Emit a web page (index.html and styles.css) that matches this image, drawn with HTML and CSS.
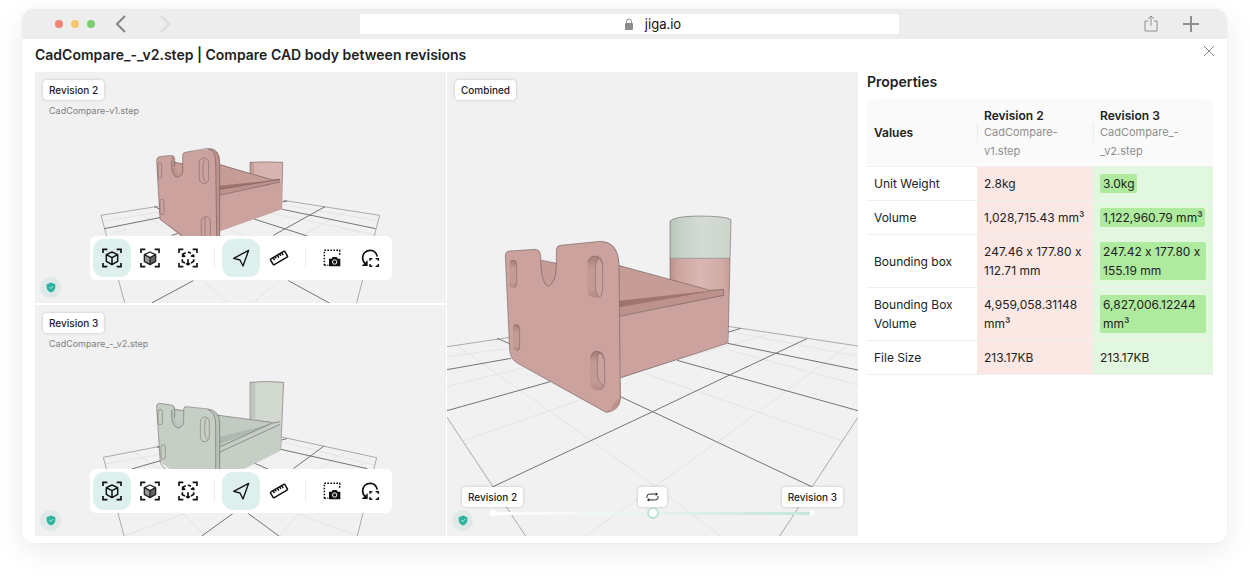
FILE: index.html
```html
<!DOCTYPE html>
<html lang="en">
<head>
<meta charset="utf-8">
<title>CadCompare_-_v2.step | Compare CAD body between revisions</title>
<meta name="viewport" content="width=device-width, initial-scale=1">
<link rel="stylesheet" href="styles.css">
</head>
<body>
<svg class="sprite" aria-hidden="true">
  <symbol id="frame" viewBox="0 0 60 60">
    <path d="M3 15V4h13M44 4h13v11M57 45v11H44M16 56H3V45" fill="none" stroke="#111" stroke-width="5"/>
  </symbol>
  <symbol id="cube" viewBox="0 0 60 60">
    <use href="#frame"/>
    <path d="M30 12l17 8v20l-17 10-17-10V20zM13 20l17 9 17-9M30 29v21" fill="none" stroke="#111" stroke-width="4.5" stroke-linejoin="round"/>
  </symbol>
  <symbol id="solid" viewBox="0 0 60 60">
    <use href="#frame"/>
    <path d="M13 20l17 9v21l-17-10z" fill="#999"/><path d="M47 20l-17 9v21l17-10z" fill="#666"/>
    <path d="M30 12l17 8v20l-17 10-17-10V20zM13 20l17 9 17-9M30 29v21" fill="none" stroke="#222" stroke-width="4" stroke-linejoin="round"/>
  </symbol>
  <symbol id="explode" viewBox="0 0 60 60">
    <use href="#frame"/>
    <path d="M23 14l-9 5v9M14 21l8 5M13 34v7l8 4M30 12l9 4M47 20l-8 5M47 20v8M47 34v6l-8 5M30 34v16M24 46l6 4 6-4" fill="none" stroke="#111" stroke-width="5"/>
  </symbol>
  <symbol id="arrow" viewBox="0 0 60 60">
    <path d="M53 7L8 31l19 5 9 18z" fill="none" stroke="#111" stroke-width="4" stroke-linejoin="round"/>
  </symbol>
  <symbol id="ruler" viewBox="0 0 60 60">
    <g transform="rotate(-30 30 30)" fill="none" stroke="#111" stroke-width="4.5">
      <rect x="5" y="20" width="50" height="20" rx="3"/><path d="M15 20v9M22 20v7M30 20v9M38 20v7M45 20v9"/>
    </g>
  </symbol>
  <symbol id="shot" viewBox="0 0 60 60">
    <path d="M7 52V7h46v16M7 52h12" fill="none" stroke="#111" stroke-width="4.5" stroke-dasharray="5 4"/>
    <path fill="#111" d="M21 32h8l3-5h12l3 5h8v23H21z"/><circle cx="38" cy="42" r="6.5" fill="none" stroke="#fff" stroke-width="3"/>
  </symbol>
  <symbol id="reset" viewBox="0 0 60 60">
    <path d="M52 26C49 13 41 7 31 7 17 7 8 17 8 30c0 9 4 14 9 18" fill="none" stroke="#111" stroke-width="5"/>
    <path fill="#111" d="M5 54h18V37z"/>
    <path d="M30 38v-6h7M47 32h8v6M55 48v7h-8M37 55h-7v-7" fill="none" stroke="#111" stroke-width="4.5"/>
  </symbol>
  <symbol id="shield" viewBox="0 0 30 32">
    <path d="M15 1l13 5v9c0 8-6 13-13 16C8 28 2 23 2 15V6z" fill="#2fb3a0"/>
    <path d="M10 15l4 4 7-7" fill="none" stroke="#d9f3ee" stroke-width="2.5"/>
  </symbol>
</svg>

<div class="window">
  <header class="titlebar">
    <div class="titlebar-left">
      <span class="dot dot-red"></span><span class="dot dot-yellow"></span><span class="dot dot-green"></span>
      <button class="nav nav-back" aria-label="Back"><svg viewBox="0 0 10 18"><path d="M9 1L1 9l8 8"/></svg></button>
      <button class="nav nav-forward" aria-label="Forward"><svg viewBox="0 0 10 18"><path d="M1 1l8 8-8 8"/></svg></button>
    </div>
    <div class="address">
      <svg class="lock" viewBox="0 0 10 13"><path d="M2.500 6V3.500a2.500 2.500 0 0 1 5 0V6" fill="none" stroke="#8c8c8c"/><rect x="1" y="5" width="8" height="7" rx="1" fill="#8c8c8c"/></svg>
      <span>jiga.io</span>
    </div>
    <div class="titlebar-right">
      <button class="tool" aria-label="Share"><svg width="14" height="18" viewBox="0 0 14 18"><path d="M4 6H1v10h12V6h-3M7 11V1M4 4l3-3 3 3" stroke-linejoin="round"/></svg></button>
      <button class="tool tool-add" aria-label="New tab"><svg width="16" height="16" viewBox="0 0 16 16"><path d="M8 0v16M0 8h16"/></svg></button>
    </div>
  </header>

  <div class="heading">
    <h1>CadCompare_-_v2.step | Compare CAD body between revisions</h1>
    <button class="close" aria-label="Close"><svg width="12" height="12" viewBox="0 0 12 12"><path d="M1 1l10 10M11 1L1 11"/></svg></button>
  </div>

  <main class="content">
    <div class="viewers">
      <div class="stack">
        <section class="viewer">
          <svg class="scene" viewBox="15 -174 1233 693" preserveAspectRatio="xMidYMid slice" role="img" aria-label="Revision 2 model">
            <g class="grid-faint"><path d="M218 274L388 246M320 246L400 290M765 225l278 47M952 242L815 318M600 300l48 20M520 452l72 67M745 452l-75 67M250 308l40-10M990 308l-55-13M700 245l345 70"/></g>
            <g class="grid-edge"><path d="M284 518L213 256 385 229M980 518l69-262-290-45"/></g>
            <g class="grid-dark"><path d="M223 296l170-34M372 229l25 12M757 238l280 58M757 216l15-3M885 230L730 316M672 267l160 51M425 316l35-10M490 452l-125 67M775 452l123 67"/></g>
            <path class="pink-light" d="M660 97q50-4 98 0L755 238H660z"/>
            <path class="pink-shade" d="M660 97h12v60h-12z"/>
            <path class="outline" d="M660 130V97q50-3 98 0L755 238"/>
            <path class="pink-top" d="M560 100l170 50 20 0-180 45z"/>
            <path class="pink-deep" d="M566 167l170-17-166 28z"/>
            <path class="pink-mid" d="M568 178l182-30v9L568 196z"/>
            <path class="pink" d="M568 194l188-38v82L570 304z"/>
            <path class="outline" d="M566 103l162 47 22-2M568 178l182-30M568 196l182-40"/>
            <path class="pink-top" d="M424 94l36 7v44h-36z"/>
            <path class="pink-mid" d="M425 76q9 2 9 13v22q6 24 20 26l-12 6q-22-6-22-60z"/>
            <path class="pink-mid" d="M540 55q28 4 30 37v226h-20z"/>
            <path class="pink" d="M380 92q0-10 8-12l30-3q7 1 7 12v21q2 30 17 32 16-4 16-20V76q0-8 7-9l70-10q21 0 22 35l3 226h-108L390 268z"/>
            <path class="outline" d="M458 318L390 268 380 92q0-10 8-12l36-4q10 0 10 12v22M432 97l26 4M425 92v18q2 30 17 32 16-4 16-20V76q0-8 7-9l68-12q34 0 36 40v223M533 58q22 0 24 35l3 225"/>
            <g class="slot"><rect x="384" y="98" width="11" height="47" rx="6"/><rect x="390" y="208" width="12" height="46" rx="6"/><rect x="508" y="83" width="28" height="78" rx="14"/><path d="M526 86q-7 4-7 20v30q2 16 9 22"/><rect x="514" y="260" width="27" height="78" rx="14"/><path d="M525 262v60"/></g>
          </svg>
          <div class="caption"><span class="pill">Revision 2</span><span class="file">CadCompare-v1.step</span></div>
          <div class="toolbar" role="toolbar" aria-label="View tools">
            <button class="active" aria-label="Wireframe"><svg><use href="#cube"/></svg></button>
            <button aria-label="Solid"><svg><use href="#solid"/></svg></button>
            <button aria-label="Explode"><svg><use href="#explode"/></svg></button>
            <i></i>
            <button class="active" aria-label="Select"><svg><use href="#arrow"/></svg></button>
            <button aria-label="Measure"><svg><use href="#ruler"/></svg></button>
            <i></i>
            <button aria-label="Snapshot"><svg><use href="#shot"/></svg></button>
            <button aria-label="Reset view"><svg><use href="#reset"/></svg></button>
          </div>
          <span class="badge"><svg><use href="#shield"/></svg></span>
        </section>

        <section class="viewer">
          <svg class="scene" viewBox="15 15 1233 693" preserveAspectRatio="xMidYMid slice" role="img" aria-label="Revision 3 model">
            <g class="grid-faint"><path d="M226 492l165-29M310 455l75 50M765 428l272 68M948 453l-90 60M600 500l40 18M460 642l65 66M805 642l-57 66M460 642L282 708M805 642l177 66"/></g>
            <g class="grid-edge"><path d="M282 708L220 472l170-33M982 708l58-235-285-62"/></g>
            <g class="grid-dark"><path d="M305 507l90-26M380 439l15 8M752 448l260 58M755 420l15-4M882 438l-92 68M670 488l45 20M608 641l-93 67M655 641l92 67"/></g>
            <path class="green-light" d="M660 247q50-5 101 0l-9 204h-92z"/>
            <path class="green-shade" d="M662 247h14v110h-14z"/>
            <path class="outline" d="M660 358V247q50-5 101 0l-9 203"/>
            <path class="green-top" d="M560 345l168 22 22-1-180 85z"/>
            <path class="green-deep" d="M568 411l150-38 6 0-156 60z"/>
            <path class="green" d="M568 448l184-80v84l-110 55-72 30z"/>
            <path class="outline" d="M560 345l164 22M568 441l156-71 26-5M568 457l182-84"/>
            <path class="green-top" d="M426 326l34 5v50h-34z"/>
            <path class="green-mid" d="M425 315q9 2 9 13v26q6 24 20 26l-9 6q-22-8-22-60z"/>
            <path class="green-mid" d="M530 327q34 3 40 40v240h-22z"/>
            <path class="green" d="M380 320q0-9 8-10l30 4q7 1 7 13v22q2 32 20 35 16-4 16-22v-34q0-9 8-8l66 9q22 4 23 43v235L398 492q-8-7-8-20z"/>
            <path class="outline" d="M408 508q-18-10-18-32L380 320q0-9 8-10l36 5q10 2 10 12v26M434 328l26 4M425 330v19q2 32 20 35 16-4 16-22v-34q0-9 8-8l66 7q34 4 34 44v142M534 329q22 6 23 43v140"/>
            <g class="slot"><rect x="384" y="328" width="13" height="46" rx="7"/><rect x="393" y="434" width="13" height="44" rx="7"/><rect x="511" y="351" width="27" height="74" rx="14"/><path d="M530 354q-6 4-6 20v25q2 14 9 20"/></g>
          </svg>
          <div class="caption"><span class="pill">Revision 3</span><span class="file">CadCompare_-_v2.step</span></div>
          <div class="toolbar" role="toolbar" aria-label="View tools">
            <button class="active" aria-label="Wireframe"><svg><use href="#cube"/></svg></button>
            <button aria-label="Solid"><svg><use href="#solid"/></svg></button>
            <button aria-label="Explode"><svg><use href="#explode"/></svg></button>
            <i></i>
            <button class="active" aria-label="Select"><svg><use href="#arrow"/></svg></button>
            <button aria-label="Measure"><svg><use href="#ruler"/></svg></button>
            <i></i>
            <button aria-label="Snapshot"><svg><use href="#shot"/></svg></button>
            <button aria-label="Reset view"><svg><use href="#reset"/></svg></button>
          </div>
          <span class="badge"><svg><use href="#shield"/></svg></span>
        </section>
      </div>

      <section class="viewer">
        <svg class="scene" viewBox="0 -384 1233 1392" preserveAspectRatio="xMidYMid slice" role="img" aria-label="Combined model">
          <defs>
            <linearGradient id="cylPink"><stop offset="0" stop-color="#bd8f8a"/><stop offset=".12" stop-color="#cca39e"/><stop offset=".5" stop-color="#dab7b2"/><stop offset=".85" stop-color="#d2aca7"/><stop offset="1" stop-color="#c79d98"/></linearGradient>
            <linearGradient id="cylGreen"><stop offset="0" stop-color="#b7c5ba"/><stop offset=".2" stop-color="#c9d3ca"/><stop offset=".55" stop-color="#d4dbd4"/><stop offset="1" stop-color="#ccd5cc"/></linearGradient>
            <linearGradient id="bore" x2="0" y2="1"><stop offset="0" stop-color="#a97c77"/><stop offset=".3" stop-color="#c49a95"/><stop offset=".8" stop-color="#c49a95"/><stop offset="1" stop-color="#b58883"/></linearGradient>
          </defs>
          <g class="grid-faint"><path d="M30 437L620 855 820 1008M0 470l185-25M0 560l250-62M50 722l360-126M845 394l388 75M845 450l388 105M960 404L690 480M1200 437L820 720 415 1008M585 518l600 204"/></g>
          <g class="grid-edge"><path d="M0 440l190-28M842 379l391 59M0 652l236 356M1233 652L998 1008"/></g>
          <g class="grid-dark"><path d="M0 509l192-34M150 415l40 17M0 632l310-87M842 397l40-12M842 430l391 80M1080 416L850 524 617 635 138 860M690 481l543 151M520 590l97 45 477 225"/></g>
          <path fill="url(#cylGreen)" d="M669 64q8-14 80-16 90 0 103 11l-3 116H669z"/>
          <path fill="url(#cylPink)" d="M669 176h180l-6 254H669z"/>
          <path class="outline" d="M669 240V64q8-14 80-16 90 0 103 11l-9 370M669 175h180"/>
          <path class="pink-top" d="M510 194l275 76 45 0-310 55z"/>
          <path class="pink-deep" d="M515 302l275-30 40-4-315 55z"/>
          <path class="pink-mid" d="M518 322l312-54v20L518 349z"/>
          <path class="pink" d="M518 349l312-61 14-15-3 157L520 535z"/>
          <path class="outline" d="M510 195l280 76 40-3v18L518 349"/>
          <path class="pink-top" d="M276 180l55 10v70h-55z"/>
          <path class="pink-mid" d="M470 125q44 8 46 68l5 405q-2 34-42 40z"/>
          <path class="pink" d="M175 168q0-14 11-15l78-5q16 1 17 20-1 82 23 92 23-14 24-60v-50q0-12 12-14l120-12q52 0 56 65l4 404q-4 44-46 43L212 490q-22-12-24-40z"/>
          <path class="outline" d="M479 638L212 490q-22-12-24-40L175 168q0-14 11-15l78-5q16 1 17 20-1 82 23 92 23-14 24-60v-50q0-12 12-14l120-12q52 0 56 65l4 404q-4 35-41 44M282 180l46 10M521 533l320-103"/>
          <path class="pink-mid" d="M492 634q2-26 27-40-2 28-27 40z"/>
          <g class="bore">
            <rect x="188" y="180" width="21" height="83" rx="10"/><rect x="198" y="373" width="20" height="79" rx="10"/>
            <rect x="421" y="168" width="46" height="125" rx="22"/><rect x="429" y="453" width="44" height="117" rx="21"/>
          </g>
          <path class="pink" d="M455 176q11 8 11 30v50q0 26-10 34-11-10-11-34v-50q0-22 10-30zM462 462q10 10 10 30v50q0 12-4 14-17-12-17-34v-45q0-16 11-15z"/>
          <g class="slot"><path d="M193 181q16-2 16 20v45q0 15-8 17M203 374q15 0 15 20v45q0 13-8 13M424 186q6-18 20-18 23 0 23 34v54q0 36-13 37M455 176q-10 8-10 30v50q0 24 11 34M432 470q6-17 15-17 26 6 26 42v50q0 22-15 25M454 460q-4 8-3 27v35q0 22 17 34"/></g>
        </svg>
        <div class="caption"><span class="pill">Combined</span></div>
        <div class="compare">
          <div class="compare-labels"><label class="pill" for="blend">Revision 2</label>
            <button class="swap" aria-label="Swap revisions"><svg viewBox="0 0 40 28"><path d="M3 17V12q0-7 8-7h23M37 11v5q0 7-8 7H6" fill="none" stroke="#222" stroke-width="3"/><path d="M30 0l7 5-7 6zM10 17l-7 6 7 5z" fill="#222"/></svg></button>
            <span class="pill">Revision 3</span></div>
          <div class="slider"><input id="blend" type="range" min="0" max="100" value="50"></div>
        </div>
        <span class="badge"><svg><use href="#shield"/></svg></span>
      </section>
    </div>

    <aside class="properties">
      <h2>Properties</h2>
      <table>
        <colgroup><col class="col-name"><col class="col-old"><col class="col-new"></colgroup>
        <thead><tr>
          <th scope="col">Values</th>
          <th scope="col"><div class="rev">Revision 2</div><div class="rev-file">CadCompare-<br>v1.step</div></th>
          <th scope="col"><div class="rev">Revision 3</div><div class="rev-file">CadCompare_-<br>_v2.step</div></th>
        </tr></thead>
        <tbody>
          <tr><td>Unit Weight</td><td>2.8kg</td><td><mark>3.0kg</mark></td></tr>
          <tr><td>Volume</td><td>1,028,715.43 mm³</td><td><mark>1,122,960.79 mm³</mark></td></tr>
          <tr><td>Bounding box</td><td>247.46 x 177.80 x 112.71 mm</td><td><mark>247.42 x 177.80 x 155.19 mm</mark></td></tr>
          <tr><td>Bounding Box Volume</td><td>4,959,058.31148 mm³</td><td><mark>6,827,006.12244 mm³</mark></td></tr>
          <tr><td>File Size</td><td>213.17KB</td><td>213.17KB</td></tr>
        </tbody>
      </table>
    </aside>
  </main>
</div>
</body>
</html>
```

FILE: styles.css
```css
* { box-sizing: border-box; }
body {
  margin: 0;
  min-height: 100vh;
  padding: 9px 22px 36px;
  display: flex;
  background: #fff;
  color: #222;
  font: 12px/19px Inter, "Liberation Sans", sans-serif;
  font-variant-ligatures: no-contextual;
}
button { border: 0; padding: 0; background: none; font: inherit; display: flex; align-items: center; justify-content: center; }
svg { display: block; }
.sprite { position: absolute; width: 0; height: 0; }

.window {
  flex: 1;
  min-width: 0;
  display: flex;
  flex-direction: column;
  border-radius: 12px;
  background: #fff;
  overflow: hidden;
  box-shadow: 0 8px 30px rgba(0, 0, 0, .08), 0 0 3px rgba(0, 0, 0, .05);
}

.titlebar {
  display: grid;
  grid-template-columns: 1fr minmax(0, 539px) 1fr;
  align-items: center;
  height: 30px;
  padding-left: 10px;
  background: #ededed;
}
.titlebar-left { display: flex; align-items: center; gap: 8px; padding-left: 23px; }
.dot { width: 8px; height: 8px; border-radius: 50%; }
.dot-red { background: #ee8277; }
.dot-yellow { background: #f4c66e; }
.dot-green { background: #7ece74; }
.nav svg { width: 10px; height: 18px; fill: none; stroke: #858585; stroke-width: 2; }
.nav-back { margin-left: 13px; }
.nav-forward { margin-left: 26px; }
.nav-forward svg { stroke: #dadada; }
.address {
  display: flex;
  align-items: center;
  justify-content: center;
  gap: 11px;
  height: 20px;
  padding-left: 46px;
  border-radius: 2px;
  background: #fff;
  color: #111;
  font-size: 13px;
}
.lock { width: 10px; height: 13px; }
.titlebar-right { display: flex; align-items: center; justify-content: flex-end; gap: 25px; padding-right: 28px; }
.tool svg { fill: none; stroke: #8e8e8e; }
.tool-add svg { stroke-width: 2; }

.heading { display: flex; justify-content: space-between; height: 33px; padding: 6px 12px 0 13px; }
h1, h2 { margin: 0; font-size: 14px; line-height: 20px; font-weight: 600; color: #1f1f1f; }
.close { height: 12px; }
.close svg { fill: none; stroke: #858585; }

.content { flex: 1; display: grid; grid-template-columns: minmax(0, 1fr) 346px; gap: 9px; padding: 0 14px 7px 13px; }
.viewers { display: grid; grid-template-columns: repeat(2, minmax(0, 1fr)); gap: 1px; min-height: 464px; }
.stack { display: grid; grid-template-rows: 1fr 1fr; gap: 2px; }
.viewer { position: relative; overflow: hidden; background: #f1f1f1; }
.scene { position: absolute; inset: 0; width: 100%; height: 100%; }
.caption { position: relative; display: flex; flex-direction: column; align-items: flex-start; gap: 4px; padding: 8px; }
.pill {
  display: inline-block;
  height: 20px;
  padding: 0 6px;
  border-radius: 4px;
  background: #fff;
  box-shadow: 0 0 3px rgba(0, 0, 0, .22);
  font-size: 10px;
  font-weight: 500;
  line-height: 20px;
}
.file { padding-left: 6px; color: #808080; font-size: 9px; line-height: 14px; }

.toolbar {
  position: absolute;
  bottom: 23px;
  left: 50%;
  transform: translateX(-50%);
  display: flex;
  align-items: center;
  padding: 3px;
  border-radius: 6px;
  background: #fff;
}
.toolbar button { width: 38px; height: 38px; border-radius: 11px; }
.toolbar .active { background: #def0ed; }
.toolbar svg { width: 20px; height: 20px; }
.toolbar i { width: 1px; height: 22px; margin: 0 7px; background: #eee; }
.badge {
  position: absolute;
  left: 5px;
  bottom: 5px;
  display: grid;
  place-items: center;
  width: 21px;
  height: 21px;
  border-radius: 50%;
  background: #dfe9e7;
}
.badge svg { width: 10px; height: 11px; }

.compare { position: absolute; left: 15px; right: 15px; bottom: 17px; }
.compare-labels { display: flex; justify-content: space-between; align-items: center; }
.swap { width: 29px; height: 20px; border-radius: 4px; background: #fff; box-shadow: 0 0 3px rgba(0, 0, 0, .22); }
.swap svg { width: 13px; height: 10px; }
.slider {
  display: flex;
  align-items: center;
  height: 12px;
  margin: 0 27px;
  background:
    radial-gradient(circle at 4px 6px, #fff 3px, transparent 4px),
    radial-gradient(circle at calc(100% - 4px) 6px, #fff 2px, transparent 3px),
    linear-gradient(90deg, #fff, #eaf3f0 45%, #c3e6dc) 4px 5px / calc(100% - 10px) 3px no-repeat;
}
.slider input { width: 100%; height: 12px; margin: 0; appearance: none; background: none; }
.slider input::-webkit-slider-thumb {
  appearance: none;
  width: 12px;
  height: 12px;
  border: 2px solid #bce0d6;
  border-radius: 50%;
  background: #fff;
}

.grid-faint, .grid-edge, .grid-dark, .outline { fill: none; }
.grid-faint { stroke: #e4e4e4; stroke-width: 3; }
.grid-edge { stroke: #aaa; stroke-width: 3; }
.grid-dark { stroke: #747474; stroke-width: 3; }
.outline { stroke: #5c4d4b; stroke-width: 2; stroke-opacity: .75; }
.pink { fill: #cba29e; }
.pink-light { fill: #d8b4b0; }
.pink-top { fill: #c69c97; }
.pink-mid { fill: #bd928d; }
.pink-deep { fill: #a0746f; }
.pink-shade { fill: #c79d98; }
.green { fill: #c5cfc6; }
.green-light { fill: #d1d9d1; }
.green-top { fill: #c1cbc2; }
.green-mid { fill: #b8c4ba; }
.green-deep { fill: #adb9af; }
.green-shade { fill: #bdc9be; }
.bore { fill: url(#bore); }
.slot { fill: none; stroke: #6b5a58; stroke-width: 2; stroke-opacity: .7; }

h2 { margin-bottom: 7px; }
table { width: 100%; table-layout: fixed; border-collapse: separate; border-spacing: 0; }
.col-name { width: 110px; }
.col-old { width: 116px; }
th, td { padding: 7px; border-bottom: 1px solid #f0f0f0; text-align: left; vertical-align: middle; }
th { position: relative; background: #fafafa; font-weight: 600; }
th:first-child { border-top-left-radius: 8px; }
th:last-child { border-top-right-radius: 8px; }
th + th { padding: 10px 7px 5px; }
th + th::before { content: ""; position: absolute; left: 0; top: 24px; width: 1px; height: 19px; background: #ececec; }
.rev { line-height: 14px; }
.rev-file { color: #8e8e8e; font-size: 11px; font-weight: 400; }
td:nth-child(2) { background: #fbe8e5; }
td:nth-child(3) { background: #e2f7e0; }
mark { display: block; width: fit-content; padding: 0 2px 0 3px; border-radius: 2px; background: #aeeb9e; color: inherit; }
```
